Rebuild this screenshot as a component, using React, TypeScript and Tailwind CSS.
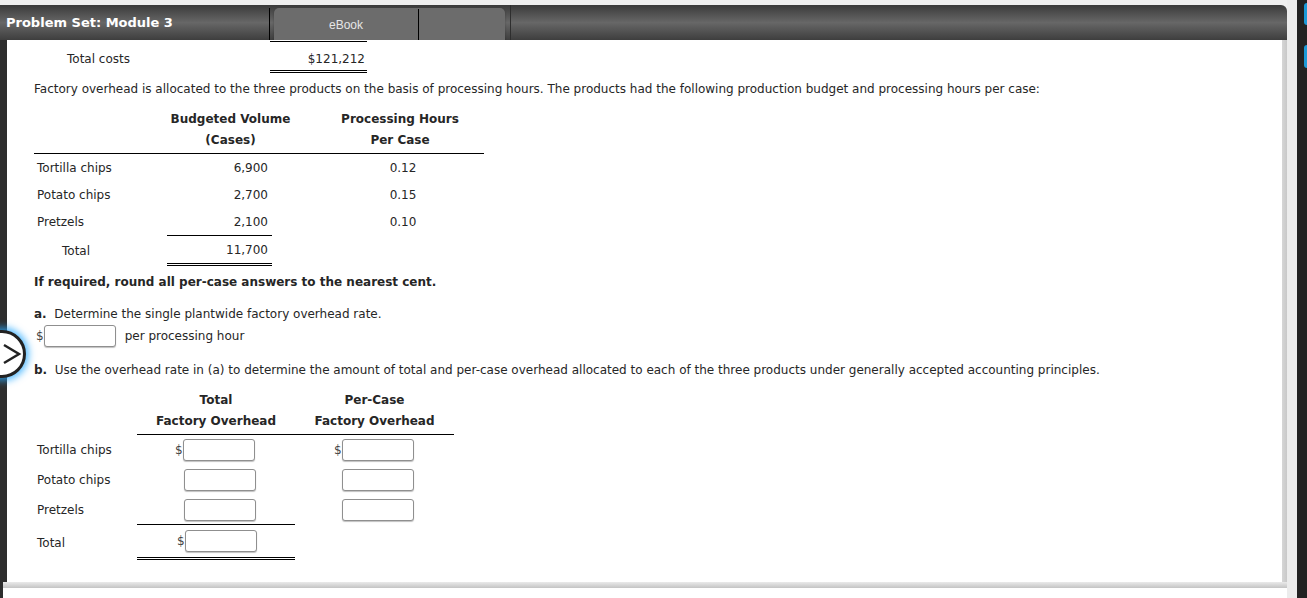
import type { ReactNode } from 'react';

const TABLE_ONE = [
  { label: 'Tortilla chips', volume: '6,900', hours: '0.12' },
  { label: 'Potato chips', volume: '2,700', hours: '0.15' },
  { label: 'Pretzels', volume: '2,100', hours: '0.10' },
];

function Field({ className = '' }: { className?: string }) {
  return (
    <input
      type="text"
      className={[
        'h-[22px] w-[72px] shrink-0 rounded-[3px] border border-[#8f8f8f] bg-white shadow-[0_1px_1px_rgba(0,0,0,0.25)] outline-none',
        className,
      ].join(' ')}
    />
  );
}

function Dollar({ children }: { children: ReactNode }) {
  return (
    <span className="flex items-center">
      <span className="text-[12px] text-[#444]">$</span>
      {children}
    </span>
  );
}

export default function App() {
  return (
    <div className="relative flex h-[598px] w-[1307px] overflow-hidden bg-[#efefef] font-['DejaVu_Sans',Verdana,sans-serif] text-[12px] text-[#262626]">
      <div className="flex w-[1287px] shrink-0 flex-col pt-[5px]">
        {/* header bar */}
        <div className="flex h-[35px] items-stretch rounded-tr-[6px] bg-[linear-gradient(to_bottom,#3a3a3a,#676767_50%,#3e3e3e)]">
          <div className="flex w-[269px] items-center whitespace-nowrap pl-[6px] text-[13px] font-bold text-white">
            Problem Set: Module 3
          </div>
          <div className="mt-[3px] w-px bg-black" />
          <div className="ml-[4px] mt-[3px] flex w-[231px] rounded-t-[5px] bg-[#6c6c6c] shadow-[0_1px_2px_rgba(0,0,0,0.3)]">
            <div className="flex w-[144px] items-center justify-center pt-[1px] font-['Liberation_Sans',Arial,sans-serif] text-[12px] text-[#e6e6e6]">
              eBook
            </div>
            <div className="mt-px w-px bg-black" />
          </div>
          <div className="ml-[5px] w-px bg-[#2e2e2e]" />
        </div>

        <div className="flex flex-1">
          <div className="w-[7px] bg-[#2d2d2d]" />
          <div className="flex-1 bg-white pl-[27px] leading-[20px]">
            {/* total costs */}
            <div className="mt-px flex">
              <div className="w-[236px] shrink-0 pl-[33px] pt-[8px]">Total costs</div>
              <div className="h-[32px] w-[97px] shrink-0 border-t border-b-[3px] border-double border-black pr-[2px] pt-[7px] text-right [border-top-style:solid]">
                $121,212
              </div>
            </div>

            <p className="mt-[6px]">
              Factory overhead is allocated to the three products on the basis of processing hours. The
              products had the following production budget and processing hours per case:
            </p>

            {/* table 1 */}
            <div className="mt-[10px]">
              <div className="flex w-[450px] whitespace-nowrap border-b border-black pb-[2px] font-bold leading-[21px]">
                <div className="w-[133px] shrink-0" />
                <div className="w-[127px] shrink-0 text-center">
                  Budgeted Volume
                  <br />
                  (Cases)
                </div>
                <div className="w-[212px] shrink-0 text-center">
                  Processing Hours
                  <br />
                  Per Case
                </div>
              </div>
              {TABLE_ONE.map((row) => (
                <div key={row.label} className="flex h-[27px] items-center">
                  <div className="w-[133px] shrink-0 pl-[3px]">{row.label}</div>
                  <div className="w-[105px] shrink-0 pr-[4px] text-right">{row.volume}</div>
                  <div className="w-[262px] shrink-0 text-center">{row.hours}</div>
                </div>
              ))}
              <div className="flex">
                <div className="flex w-[133px] shrink-0 items-center pl-[28px]">Total</div>
                <div className="flex h-[31px] w-[105px] shrink-0 items-center justify-end border-t border-b-[3px] border-double border-black pr-[4px] [border-top-style:solid]">
                  11,700
                </div>
              </div>
            </div>

            <p className="mt-[6px] font-bold">If required, round all per-case answers to the nearest cent.</p>

            <p className="mt-[12px]">
              <span className="font-bold">a.</span>&nbsp; Determine the single plantwide factory overhead
              rate.
            </p>
            <div className="mt-px flex items-center pl-[2px]">
              <Dollar>
                <Field />
              </Dollar>
              <span className="ml-[9px]">per processing hour</span>
            </div>

            <p className="mt-[13px]">
              <span className="font-bold">b.</span>&nbsp; Use the overhead rate in (a) to determine the amount
              of total and per-case overhead allocated to each of the three products under generally
              accepted accounting principles.
            </p>

            {/* table 2 */}
            <div className="mt-[10px]">
              <div className="flex">
                <div className="w-[103px] shrink-0" />
                <div className="flex whitespace-nowrap border-b border-black pb-[2px] font-bold leading-[21px]">
                  <div className="w-[158px] shrink-0 text-center">
                    Total
                    <br />
                    Factory Overhead
                  </div>
                  <div className="w-[159px] shrink-0 text-center">
                    Per-Case
                    <br />
                    Factory Overhead
                  </div>
                </div>
              </div>
              <div className="flex h-[30px] items-center">
                <div className="w-[103px] shrink-0 pl-[3px]">Tortilla chips</div>
                <div className="w-[158px] shrink-0 pl-[38px]">
                  <Dollar>
                    <Field />
                  </Dollar>
                </div>
                <div className="pl-[39px]">
                  <Dollar>
                    <Field />
                  </Dollar>
                </div>
              </div>
              <div className="flex h-[30px] items-center">
                <div className="w-[103px] shrink-0 pl-[3px]">Potato chips</div>
                <div className="w-[158px] shrink-0 pl-[47px]">
                  <Field />
                </div>
                <div className="pl-[47px]">
                  <Field />
                </div>
              </div>
              <div className="flex h-[29px] items-center">
                <div className="w-[103px] shrink-0 pl-[3px]">Pretzels</div>
                <div className="w-[158px] shrink-0 pl-[47px]">
                  <Field />
                </div>
                <div className="pl-[47px]">
                  <Field />
                </div>
              </div>
              <div className="flex">
                <div className="flex w-[103px] shrink-0 items-center pl-[3px] pt-[2px]">Total</div>
                <div className="flex h-[36px] w-[158px] shrink-0 items-center border-t border-b-[3px] border-double border-black pl-[40px] [border-top-style:solid]">
                  <Dollar>
                    <Field />
                  </Dollar>
                </div>
              </div>
            </div>
          </div>
          <div className="w-[5px] bg-[linear-gradient(to_right,#d6d6d6,#c8c8c8)]" />
        </div>

        <div className="flex h-[16px]">
          <div className="w-[3px] bg-[#2d2d2d]" />
          <div className="flex flex-1 flex-col">
            <div className="h-[6px] bg-[linear-gradient(to_bottom,#eaeaea,#c4c4c4)]" />
            <div className="flex-1 bg-white" />
          </div>
        </div>
      </div>

      <div className="w-[10px] shrink-0 bg-[#ececec]" />
      <div className="flex w-[10px] shrink-0 flex-col items-end bg-[#222] pt-[3px]">
        <div className="h-[22px] w-[3px] rounded-l-[3px] bg-[#1c9ad8]" />
        <div className="mt-[20px] h-[23px] w-[3px] rounded-l-[3px] bg-[#1c9ad8]" />
      </div>

      {/* next arrow button */}
      <div className="absolute left-[-22px] top-[330px] flex h-[48px] w-[48px] items-center justify-center rounded-full border-[3px] border-[#222] bg-white shadow-[0_0_7px_3px_rgba(40,170,255,0.75)]">
        <svg width="20" height="24" viewBox="0 0 20 24" className="ml-[20px]">
          <path d="M2 3 L17 12 L2 21" fill="none" stroke="#222" strokeWidth="2.5" strokeLinejoin="miter" />
        </svg>
      </div>
    </div>
  );
}
